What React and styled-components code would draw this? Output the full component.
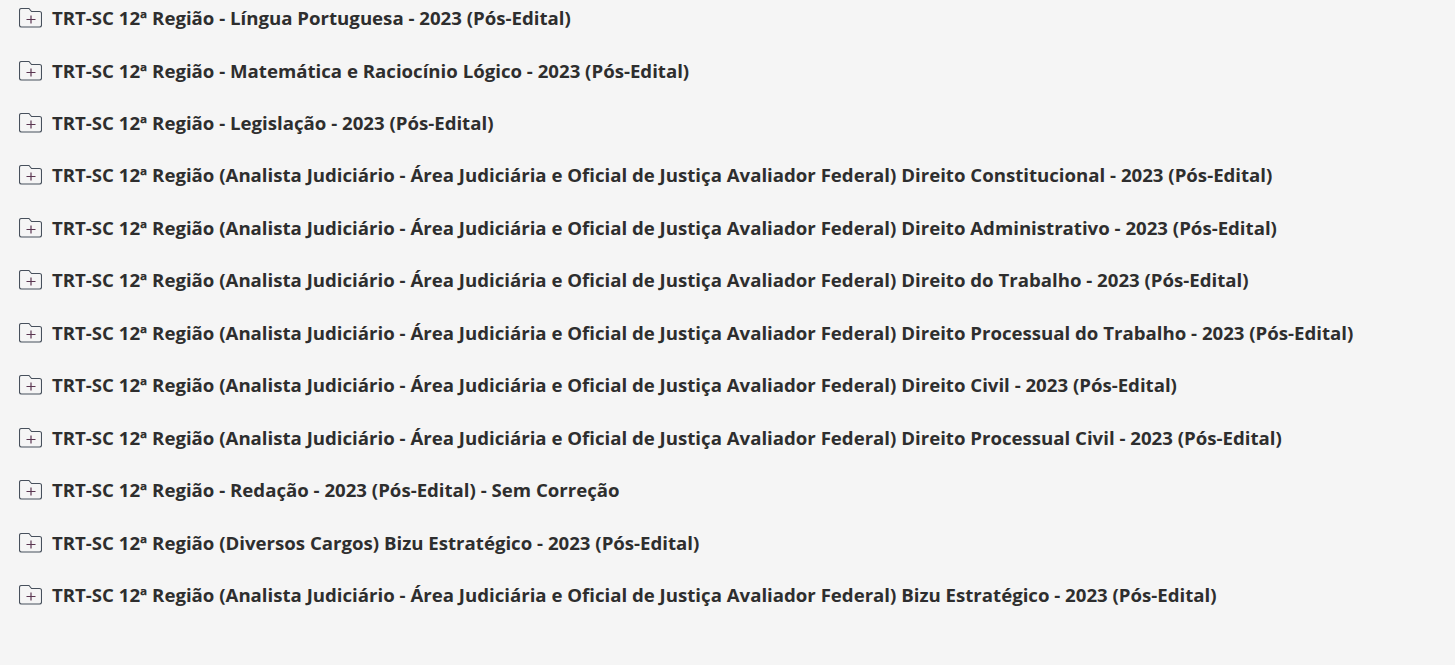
import React from 'react';
import styled, { createGlobalStyle } from 'styled-components';

const GlobalStyle = createGlobalStyle`
  html, body {
    margin: 0;
    padding: 0;
    background: #f5f5f5;
  }
`;

const List = styled.ul`
  list-style: none;
  margin: 0;
  padding: 5.1px 0 0 19px;
  min-height: 660px;
  background: #f5f5f5;
  font-family: "Open Sans", sans-serif;
`;

const Row = styled.li`
  display: flex;
  align-items: center;
  height: 26px;
  margin-bottom: 26.46px;
  gap: 10px;
`;

const Title = styled.span`
  font-size: 18.645px;
  font-weight: 700;
  line-height: 26px;
  color: #2e2e2e;
  white-space: nowrap;
`;

const FolderSvg = styled.svg`
  width: 23px;
  height: 20px;
  flex: none;
`;

const FolderPlus = () => (
  <FolderSvg viewBox="0 0 23 20" fill="none">
    <path
      d="M0.5 2.5V17C0.5 18.2 1.3 19 2.5 19H20.5C21.7 19 22.5 18.2 22.5 17V5.5C22.5 4.3 21.7 3.5 20.5 3.5H12.5L10 0.5H2.5C1.3 0.5 0.5 1.3 0.5 2.5Z"
      stroke="#47505c"
      strokeWidth="1.1"
      strokeLinejoin="round"
    />
    <path d="M12 7.5V15.5M7.5 11.5H16.5" stroke="#5a3550" strokeWidth="1.2" />
  </FolderSvg>
);

const JUD = 'TRT-SC 12ª Região (Analista Judiciário - Área Judiciária e Oficial de Justiça Avaliador Federal)';

const items = [
  'TRT-SC 12ª Região - Língua Portuguesa - 2023 (Pós-Edital)',
  'TRT-SC 12ª Região - Matemática e Raciocínio Lógico - 2023 (Pós-Edital)',
  'TRT-SC 12ª Região - Legislação - 2023 (Pós-Edital)',
  `${JUD} Direito Constitucional - 2023 (Pós-Edital)`,
  `${JUD} Direito Administrativo - 2023 (Pós-Edital)`,
  `${JUD} Direito do Trabalho - 2023 (Pós-Edital)`,
  `${JUD} Direito Processual do Trabalho - 2023 (Pós-Edital)`,
  `${JUD} Direito Civil - 2023 (Pós-Edital)`,
  `${JUD} Direito Processual Civil - 2023 (Pós-Edital)`,
  'TRT-SC 12ª Região - Redação - 2023 (Pós-Edital) - Sem Correção',
  'TRT-SC 12ª Região (Diversos Cargos) Bizu Estratégico - 2023 (Pós-Edital)',
  `${JUD} Bizu Estratégico - 2023 (Pós-Edital)`,
];

const App = () => (
  <>
    <GlobalStyle />
    <List>
      {items.map((item) => (
        <Row key={item}>
          <FolderPlus />
          <Title>{item}</Title>
        </Row>
      ))}
    </List>
  </>
);

export default App;
